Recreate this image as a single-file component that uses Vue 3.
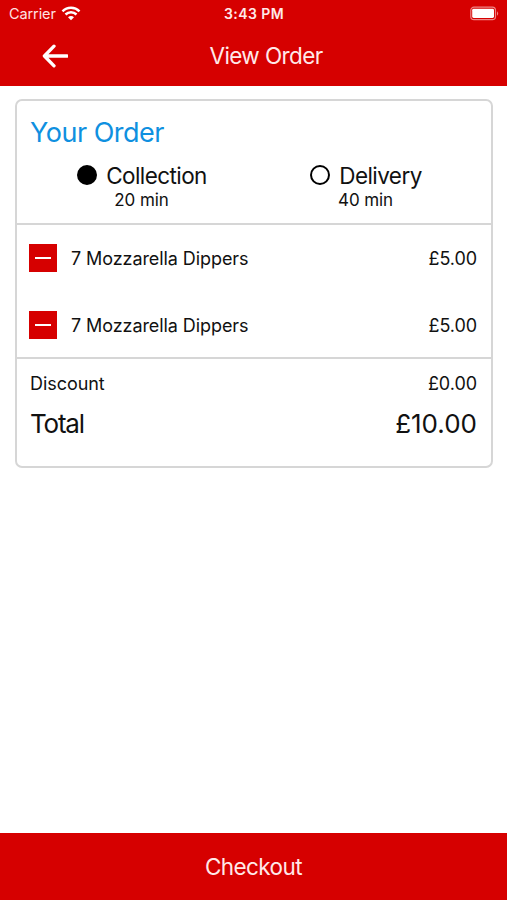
<script setup>
import { ref } from 'vue'

const method = ref('collection')
const methods = [
  { id: 'collection', label: 'Collection', time: '20 min' },
  { id: 'delivery', label: 'Delivery', time: '40 min' },
]
const items = [
  { id: 1, name: '7 Mozzarella Dippers', price: '£5.00' },
  { id: 2, name: '7 Mozzarella Dippers', price: '£5.00' },
]
</script>

<template>
  <div class="screen">
    <header class="header">
      <div class="status">
        <div class="carrier">
          <span>Carrier</span>
          <svg class="wifi" viewBox="0 0 20 15" width="20" height="15">
            <path d="M1.500 5.300C6.200 .7 13.800 .7 18.500 5.300" />
            <path d="M4.500 8.500C7.600 5.500 12.400 5.500 15.500 8.500" />
            <path class="dot" d="M10 14.200L7 11.200C8.700 9.600 11.300 9.600 13 11.200Z" />
          </svg>
        </div>
        <span class="clock">3:43 PM</span>
        <svg class="battery" viewBox="0 0 31 15" width="31" height="15">
          <rect class="shell" x="1.800" y="1.200" width="24.700" height="12.400" rx="3.200" />
          <rect class="charge" x="3.200" y="2.800" width="21.800" height="9.200" rx="1.400" />
          <path class="cap" d="M28 5.200Q30.400 7.500 28 9.800Z" />
        </svg>
      </div>
      <div class="nav">
        <svg class="back" viewBox="0 0 26 24" width="26" height="24">
          <path d="M12 2.200L2.400 12L12 21.800M2.600 12H25" />
        </svg>
        <h1 class="title">View Order</h1>
      </div>
    </header>

    <main class="content">
      <section class="card">
        <div class="top">
          <h2 class="heading">Your Order</h2>
          <div class="methods">
            <div v-for="m in methods" :key="m.id" class="method" :class="m.id" @click="method = m.id">
              <div class="choice">
                <span class="radio" :class="{ on: method === m.id }"></span>
                <span class="label">{{ m.label }}</span>
              </div>
              <span class="time">{{ m.time }}</span>
            </div>
          </div>
        </div>
        <div class="items">
          <div v-for="item in items" :key="item.id" class="item">
            <button class="remove" aria-label="Remove"><span class="minus"></span></button>
            <span class="name">{{ item.name }}</span>
            <span class="price">{{ item.price }}</span>
          </div>
        </div>
        <div class="summary">
          <div class="line"><span class="discount">Discount</span><span class="price">£0.00</span></div>
          <div class="line total"><span class="word">Total</span><span class="sum">£10.00</span></div>
        </div>
      </section>
    </main>

    <button class="checkout">Checkout</button>
  </div>
</template>

<style>
body {
  background: #fff;
}
</style>

<style scoped>
* {
  box-sizing: border-box;
}
.screen {
  display: flex;
  flex-direction: column;
  height: 900px;
  font-family: Inter, "Liberation Sans", sans-serif;
  color: #111;
  background: #fff;
  white-space: nowrap;
}
h1, h2 {
  margin: 0;
  font-weight: 400;
}
button {
  border: 0;
  padding: 0;
  font-family: inherit;
}
svg {
  display: block;
  fill: none;
}
.header {
  height: 86px;
  background: #d60000;
  color: #fff;
}
.status {
  display: grid;
  grid-template-columns: 1fr auto 1fr;
  align-items: center;
  height: 27px;
  padding: 0 7px 0 9px;
}
.carrier {
  display: flex;
  align-items: center;
  gap: 5px;
  font-size: 14.5px;
  letter-spacing: -0.1px;
  color: #ffe3e3;
}
.wifi path {
  stroke: #fff;
  stroke-width: 2.500;
}
.wifi .dot {
  fill: #fff;
  stroke: none;
}
.clock {
  margin-right: 1px;
  font-size: 14px;
  font-weight: 600;
  letter-spacing: 0.45px;
  color: #ffe9e9;
}
.battery {
  justify-self: end;
}
.shell {
  stroke: #ee8585;
  stroke-width: 1.200;
}
.charge {
  fill: #fff;
}
.cap {
  fill: #ee8585;
}
.nav {
  display: grid;
  grid-template-columns: 1fr auto 1fr;
  align-items: center;
  height: 59px;
  padding: 0 0 2px;
}
.back {
  margin: 1px 0 0 42px;
}
.back path {
  stroke: #fff;
  stroke-width: 3.300;
  stroke-linejoin: round;
  stroke-linecap: round;
}
.title {
  margin-left: 25px;
  font-size: 22.5px;
  letter-spacing: -0.6px;
  color: #ffe9e9;
}
.content {
  flex: 1;
  padding: 13px 14px 0 15px;
}
.card {
  height: 369px;
  border: 2px solid #d6d6d6;
  border-radius: 7px;
}
.top {
  height: 124px;
  padding: 13px 13px 0;
  border-bottom: 2px solid #d6d6d6;
}
.heading {
  height: 37px;
  line-height: 37px;
  font-size: 27px;
  letter-spacing: -0.5px;
  color: #0f90e0;
}
.methods {
  display: grid;
  grid-template-columns: 1fr 1fr;
  padding-top: 11px;
}
.method {
  display: flex;
  flex-direction: column;
  align-items: center;
}
.choice {
  display: flex;
  align-items: center;
  gap: 9px;
  height: 26px;
  font-size: 22.5px;
  letter-spacing: -0.58px;
}
.radio {
  width: 20px;
  height: 20px;
  border: 2px solid #000;
  border-radius: 50%;
}
.radio.on {
  background: #000;
}
.time {
  height: 24px;
  margin-right: 1px;
  line-height: 24px;
  font-size: 17px;
  letter-spacing: -0.1px;
}
.items {
  height: 134px;
  border-bottom: 2px solid #d6d6d6;
}
.item {
  display: flex;
  align-items: center;
  height: 67px;
  padding: 0 14px 1px 12px;
  font-size: 18px;
  letter-spacing: -0.08px;
}
.remove {
  display: flex;
  align-items: center;
  justify-content: center;
  width: 28px;
  height: 28px;
  margin-right: 14px;
  background: #d60000;
}
.minus {
  width: 16px;
  height: 2px;
  background: #fff;
}
.price, .sum {
  margin-left: auto;
}
.summary {
  padding: 12px 14px 0 13px;
}
.line {
  display: flex;
  align-items: center;
  height: 24px;
  font-size: 18px;
  letter-spacing: -0.05px;
}
.total {
  height: 57px;
  font-size: 26px;
  letter-spacing: 0;
}
.word {
  letter-spacing: -1.2px;
}
.checkout {
  height: 67px;
  background: #d60000;
  color: #ffe9e9;
  font-size: 22.5px;
  letter-spacing: -0.6px;
}
</style>
